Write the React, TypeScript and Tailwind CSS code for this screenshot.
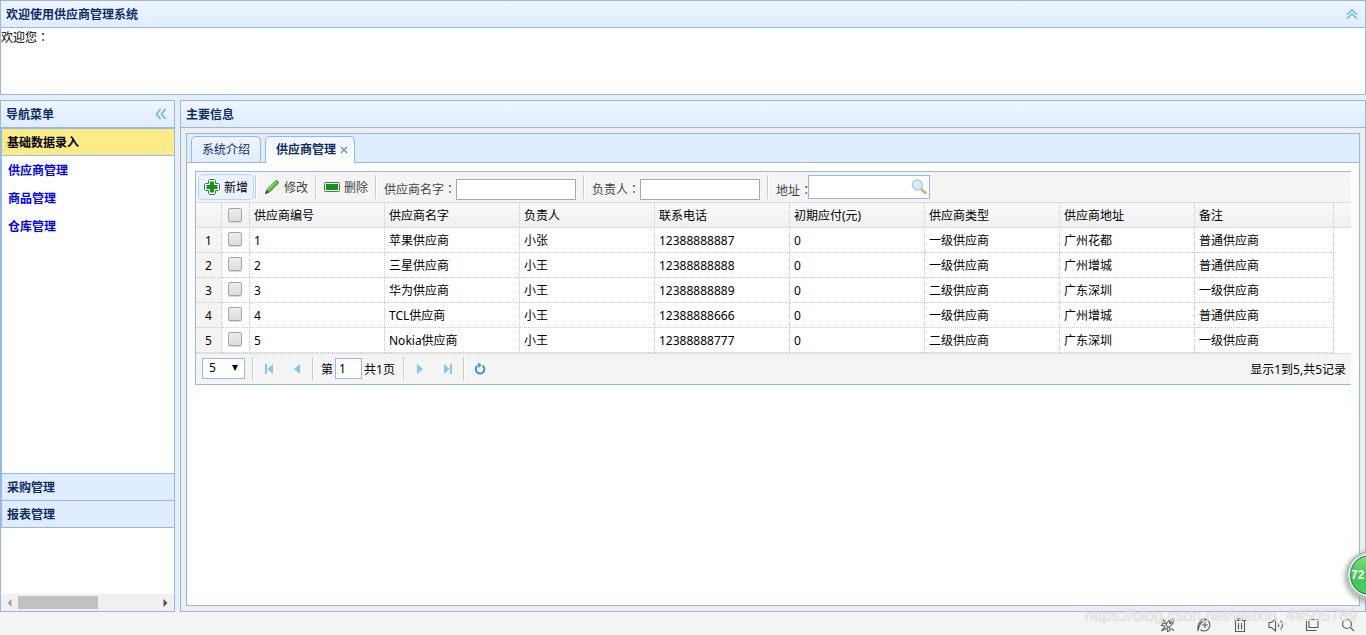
import React from "react";

const rows = [
  ["1", "苹果供应商", "小张", "12388888887", "0", "一级供应商", "广州花都", "普通供应商"],
  ["2", "三星供应商", "小王", "12388888888", "0", "一级供应商", "广州增城", "普通供应商"],
  ["3", "华为供应商", "小王", "12388888889", "0", "二级供应商", "广东深圳", "一级供应商"],
  ["4", "TCL供应商", "小王", "12388888666", "0", "一级供应商", "广州增城", "普通供应商"],
  ["5", "Nokia供应商", "小王", "12388888777", "0", "二级供应商", "广东深圳", "一级供应商"],
];

const headings = ["供应商编号", "供应商名字", "负责人", "联系电话", "初期应付(元)", "供应商类型", "供应商地址", "备注"];

const panelHead =
  "flex h-[27px] shrink-0 items-center justify-between border-b border-[#95b8e7] bg-linear-to-b from-[#eff5ff] to-[#e0ecff] px-[5px] font-bold text-[#0e2d5f]";

const checkbox =
  "block size-[14px] ml-[6px] appearance-none rounded-[2px] border border-[#a6a6a6] bg-linear-to-b from-[#ededed] to-[#dcdcdc] shadow-[0_1px_0_#d8d8d8] checked:bg-[#4a90d9]";

const textInput = "h-[21px] w-[120px] border border-[#a9a9a9] bg-white px-1 text-black outline-none";

/* Full-width colon centred in its em box */
function Colon() {
  return <span className="font-['Noto_Sans_CJK_TC',sans-serif]">：</span>;
}

function Separator() {
  return <span className="h-6 w-[2px] shrink-0 border-l border-r border-l-[#ccc] border-r-white" />;
}

function DoubleChevron({ up }: { up?: boolean }) {
  return (
    <svg className="size-4" viewBox="0 0 16 16" fill="none" stroke="#62b4ee" strokeWidth="1.5">
      {up ? <path d="M3 8.5 8 4l5 4.500M3 12.500l5-4.500 5 4.500" /> : <path d="M7.500 3 3.500 8l4 5M12.500 3l-4 5 4 5" />}
    </svg>
  );
}

function AddIcon() {
  return (
    <svg className="size-4" viewBox="0 0 16 16">
      <path d="M5.500.5h5l1 1v3h3l1 1v5l-1 1h-3v3l-1 1h-5l-1-1v-3h-3l-1-1v-5l1-1h3v-3z" fill="#fff" stroke="#2f7a38" />
      <path d="M6 2.500h4V6h3.500v4H10v3.500H6V10H2.500V6H6z" fill="#149414" />
    </svg>
  );
}

function PencilIcon() {
  return (
    <svg className="size-4" viewBox="0 0 16 16">
      <path d="M1.500 14.500 3 10.500 11.500 2q1-1 2.300.2t.2 2.300L5.500 13z" fill="#4cc22c" stroke="#23801c" strokeWidth=".8" />
      <path d="M4 11 12 3" stroke="#b4ef8f" />
      <path d="m1 15 1.500-4L5 13.500z" fill="#4c4b32" />
    </svg>
  );
}

function RemoveIcon() {
  return (
    <svg className="size-4" viewBox="0 0 16 16">
      <rect x=".5" y="3.500" width="15" height="9" rx="1" fill="#fff" stroke="#3d7e45" />
      <rect x="2" y="5" width="12" height="6" fill="#159215" />
    </svg>
  );
}

function MagnifierIcon() {
  return (
    <svg className="size-4" viewBox="0 0 16 16">
      <path d="m10 10 4.500 4" stroke="#d9ad78" strokeWidth="2.600" strokeLinecap="round" />
      <circle cx="6.500" cy="6" r="5" fill="#d5ecfc" stroke="#b4cbe4" strokeWidth="1.500" />
      <path d="M3.500 6q0-3 3-3" stroke="#fff" strokeWidth="1.200" fill="none" />
    </svg>
  );
}

function PageIcon({ kind }: { kind: "first" | "prev" | "next" | "last" }) {
  return (
    <svg className="size-4" viewBox="0 0 16 16" fill="#8ac4ee">
      {kind === "first" && <path d="M4 3h2v10H4zM12 3v10L6.500 8z" />}
      {kind === "prev" && <path d="M11 3v10L5 8z" />}
      {kind === "next" && <path d="M5 3v10l6-5z" />}
      {kind === "last" && <path d="M4 3v10l5.500-5zM10 3h2v10h-2z" />}
    </svg>
  );
}

function ToolButton({ icon, label, active }: { icon: React.ReactNode; label: string; active?: boolean }) {
  return (
    <button
      type="button"
      className={
        active
          ? "flex h-[26px] items-center gap-1 rounded-[5px] border border-[#b7d2ff] bg-[#eaf2ff] px-[5px] text-black"
          : "flex h-[26px] items-center gap-1 border border-transparent px-[6px] text-[#444]"
      }
    >
      {icon}
      <span className="pt-[2px]">{label}</span>
    </button>
  );
}

function StatusIcons() {
  const common = { className: "size-4", viewBox: "0 0 16 16", fill: "none", stroke: "#5a5a5a", strokeWidth: 1.1 };
  return (
    <>
      <button type="button" aria-label="加速">
        <svg {...common}>
          <path d="M6 8q2-5.500 8-6-.5 6-6 8.500zM6.500 6.500 3 6l-1.500 2.500 3.500.5M9.500 10l.5 3.500-2.500 1L7 11M5 9.500l-3.500 4.500 5-3M2.500 2.500l3 2.500M11 11.500l3 2" />
          <circle cx="10.500" cy="5.500" r="1" />
        </svg>
      </button>
      <button type="button" aria-label="模式">
        <svg {...common}>
          <path d="M4.500 13A6 6 0 1 0 4 3.500M2 14Q3 5 11 2M2 14q-1-6 3-10M9 5v6M6 8h6M4.500 13 8 14" />
        </svg>
      </button>
      <button type="button" aria-label="清理">
        <svg {...common}>
          <path d="M2 3.500h12M6 3.500v-2h4v2M3.500 3.500v11h9v-11M6.500 6v6.500M9.500 6v6.500" />
        </svg>
      </button>
      <button type="button" aria-label="声音">
        <svg {...common}>
          <path d="M1 5.500h2.500L7.500 2v12L3.500 10.500H1zM10 6q1.500 2 0 4M12.500 3.500q4 4.500 0 9" />
        </svg>
      </button>
      <button type="button" aria-label="窗口">
        <svg {...common}>
          <path d="M5 2.500h9v8H5zM2.500 4v9.500h10" />
        </svg>
      </button>
      <button type="button" aria-label="缩放">
        <svg {...common}>
          <circle cx="7" cy="7" r="4.500" />
          <path d="m10.300 10.300 3.700 3.700" />
        </svg>
      </button>
    </>
  );
}

export default function App() {
  return (
    <div className="relative flex min-h-screen flex-col overflow-hidden bg-[#e6eef8] font-['Noto_Sans','Noto_Sans_CJK_SC',sans-serif] text-xs leading-4 text-black">
      <header className="flex flex-col border border-[#95b8e7] bg-white">
        <div className={panelHead}>
          <h1 className="pt-[2px]">欢迎使用供应商管理系统</h1>
          <button type="button" aria-label="收起">
            <DoubleChevron up />
          </button>
        </div>
        <p className="h-[66px] pt-px">欢迎您<Colon /></p>
      </header>

      <div className="mt-[5px] flex flex-1 gap-[5px]">
        <nav className="flex w-[175px] shrink-0 flex-col border border-[#95b8e7] bg-white">
          <div className={panelHead}>
            <h2 className="pt-[2px]">导航菜单</h2>
            <button type="button" aria-label="折叠">
              <DoubleChevron />
            </button>
          </div>
          <div className="flex h-[400px] flex-col border-t border-l border-[#95b8e7] font-bold text-[#0e2d5f]">
            <button type="button" className="h-[27px] shrink-0 border-b border-[#95b8e7] bg-[#fbec88] px-[5px] pt-[2px] text-left font-bold text-black">
              基础数据录入
            </button>
            <ul className="flex-1 px-[6px] pt-px leading-7 text-[#0000ff]">
              <li><a href="#supplier">供应商管理</a></li>
              <li><a href="#goods">商品管理</a></li>
              <li><a href="#warehouse">仓库管理</a></li>
            </ul>
            <button type="button" className="h-7 shrink-0 border-y border-[#95b8e7] bg-[#e0ecff] px-[5px] pt-[2px] text-left font-bold">
              采购管理
            </button>
            <button type="button" className="h-[27px] shrink-0 border-b border-[#95b8e7] bg-[#e0ecff] px-[5px] pt-[2px] text-left font-bold">
              报表管理
            </button>
          </div>
          <div className="mt-auto flex h-[17px] items-center bg-[#f1f1f1]">
            <svg className="h-4 w-[17px]" viewBox="0 0 16 16" fill="#a3a3a3"><path d="M10 4v8L6 8z" /></svg>
            <span className="h-[13px] w-20 bg-[#c1c1c1]" />
            <svg className="ml-auto h-4 w-[17px]" viewBox="0 0 16 16" fill="#505050"><path d="M6 4v8l4-4z" /></svg>
          </div>
        </nav>

        <main className="flex min-w-0 flex-1 flex-col border border-[#95b8e7] bg-[#eee]">
          <div className={panelHead}>
            <h2 className="pt-[2px]">主要信息</h2>
          </div>
          <section className="m-[5px] flex flex-1 flex-col border border-[#95b8e7] bg-white">
            <div role="tablist" className="flex h-[29px] items-end gap-1 border-b border-[#95b8e7] bg-[#e0ecff] px-1">
              <button role="tab" type="button" className="h-[26px] rounded-t-[5px] border border-b-0 border-[#95b8e7] bg-linear-to-b from-[#eff5ff] to-[#e0ecff] px-[10px] text-[#0e2d5f]">
                系统介绍
              </button>
              <button role="tab" type="button" aria-selected="true" className="-mb-px flex h-[27px] items-center gap-1 rounded-t-[5px] border border-b-0 border-[#95b8e7] bg-linear-to-b from-[#eff5ff] to-white pr-[6px] pl-[10px] font-bold text-[#0e2d5f]">
                供应商管理
                <svg className="size-2" viewBox="0 0 8 8" stroke="#6a8fc8" strokeWidth="1.400"><path d="m1 1 6 6M7 1 1 7" /></svg>
              </button>
            </div>

            <div className="m-2 border-y border-l border-[#95b8e7]">
              <div className="flex h-[31px] items-center border-b border-[#ddd] bg-[#f4f4f4] pl-[2px] text-[#444]">
                <ToolButton icon={<AddIcon />} label="新增" active />
                <span className="w-px" />
                <Separator />
                <ToolButton icon={<PencilIcon />} label="修改" />
                <Separator />
                <ToolButton icon={<RemoveIcon />} label="删除" />
                <Separator />
                <label className="mx-[7px] flex items-center pt-[5px]">
                  <span>供应商名字<Colon /></span>
                  <input className={textInput} />
                </label>
                <Separator />
                <label className="mx-[7px] flex items-center pt-[5px]">
                  <span>负责人<Colon /></span>
                  <input className={textInput} />
                </label>
                <Separator />
                <label htmlFor="address" className="ml-[7px] w-8 pt-[6px] whitespace-nowrap">地址<Colon /></label>
                <span className="flex h-6 w-[122px] items-center border border-[#95b8e7] bg-white pr-[2px]">
                  <input id="address" className="h-full w-full min-w-0 px-1 text-black outline-none" />
                  <button type="button" aria-label="搜索"><MagnifierIcon /></button>
                </span>
              </div>

              <table className="w-full table-fixed border-separate border-spacing-0 text-left">
                <colgroup>
                  <col className="w-[26px]" />
                  <col className="w-7" />
                  {headings.slice(0, 7).map((h) => <col key={h} className="w-[135px]" />)}
                  <col className="w-[139px]" />
                  <col />
                </colgroup>
                <thead>
                  <tr className="h-[25px] bg-linear-to-b from-[#f9f9f9] to-[#efefef]">
                    <th className="border-r border-b border-r-[#ccc] border-b-[#ddd] [border-right-style:dotted]" />
                    <th className="border-r border-b border-r-[#ccc] border-b-[#ddd] pb-px [border-right-style:dotted]">
                      <input type="checkbox" aria-label="全选" className={checkbox} />
                    </th>
                    {headings.map((h) => (
                      <th key={h} className="border-r border-b border-r-[#ccc] border-b-[#ddd] px-1 pt-[2px] font-normal [border-right-style:dotted]">{h}</th>
                    ))}
                    <th className="border-b border-[#ddd]" />
                  </tr>
                </thead>
                <tbody>
                  {rows.map((row) => (
                    <tr key={row[0]} className="h-[25px]">
                      <td className="border-r border-b border-dotted border-[#ccc] bg-[#f4f4f4] pt-[2px] text-center">{row[0]}</td>
                      <td className="border-r border-b border-dotted border-[#ccc] pb-[2px]">
                        <input type="checkbox" aria-label={row[1]} className={checkbox} />
                      </td>
                      {row.map((cell, i) => (
                        <td key={i} className="border-r border-b border-dotted border-[#ccc] px-1 pt-[2px]">{cell}</td>
                      ))}
                      <td />
                    </tr>
                  ))}
                </tbody>
              </table>

              <div className="flex h-[31px] items-center border-t border-[#ddd] bg-[#f4f4f4] pr-[5px] pl-[6px]">
                <span className="relative mr-[7px] mb-[2px]">
                  <select aria-label="每页条数" className="block h-[21px] w-[43px] appearance-none border border-[#95b8e7] bg-white pl-[6px] outline-none">
                    <option>5</option>
                    <option>10</option>
                  </select>
                  <svg className="pointer-events-none absolute top-[6px] right-[6px] size-2" viewBox="0 0 8 8"><path d="M1 1h6L4 7z" /></svg>
                </span>
                <Separator />
                <button type="button" aria-label="首页" className="ml-[7px] w-7"><PageIcon kind="first" /></button>
                <button type="button" aria-label="上一页" className="w-[23px]"><PageIcon kind="prev" /></button>
                <Separator />
                <label className="mr-2 ml-[7px] flex items-center gap-[2px]">
                  <span className="pt-[2px]">第</span>
                  <input defaultValue="1" className="mb-[2px] h-[21px] w-[27px] border border-[#95b8e7] bg-white px-[3px] outline-none" />
                  <span className="pt-[2px]">共1页</span>
                </label>
                <Separator />
                <button type="button" aria-label="下一页" className="ml-[7px] w-7"><PageIcon kind="next" /></button>
                <button type="button" aria-label="末页" className="w-[23px]"><PageIcon kind="last" /></button>
                <Separator />
                <button type="button" aria-label="刷新" className="ml-[7px]">
                  <svg className="size-4" viewBox="0 0 16 16" fill="none" stroke="#2d8fd8" strokeWidth="1.800">
                    <path d="M5.500 4.800A4.300 4.300 0 1 0 10.500 4.700" />
                    <path d="M6 1.500 9.500 4 6.500 7z" fill="#2d8fd8" stroke="none" />
                  </svg>
                </button>
                <span className="ml-auto pt-[2px]">显示1到5,共5记录</span>
              </div>
            </div>
          </section>
        </main>
      </div>

      <footer className="flex h-[23px] items-center justify-end gap-5 bg-[#f4f4f4] pt-[2px] pr-[10px]">
        <StatusIcons />
      </footer>

      <span className="pointer-events-none absolute right-[9px] bottom-[9px] font-['Liberation_Sans',sans-serif] text-base leading-5 text-white/60 [text-shadow:0_0_1px_#bbb]">
        https://blog.csdn.net/weixin_44505789
      </span>
      <button type="button" className="absolute -right-7 bottom-9 flex size-12 items-center rounded-full border-2 border-[#bbb] bg-linear-to-b from-[#8be07f] via-[#43c558] to-[#4fd062] pl-[3px] font-['Liberation_Sans',sans-serif] font-bold text-white shadow-[inset_0_0_0_2px_#eee,inset_0_0_0_3px_#1f8a4c,0_2px_6px_#888]">
        72
      </button>
    </div>
  );
}
